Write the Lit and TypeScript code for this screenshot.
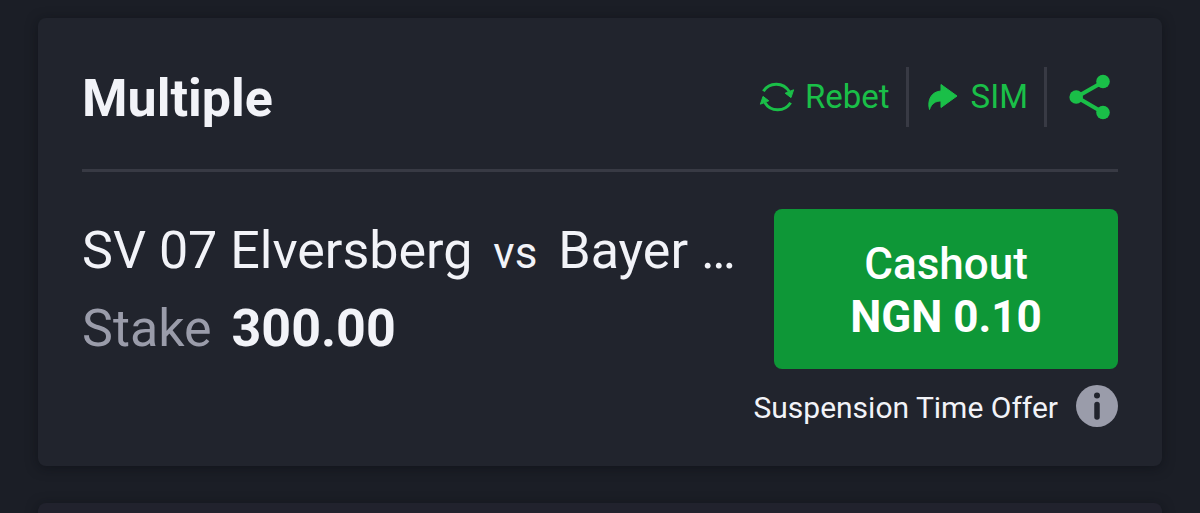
import { LitElement, html, css, svg } from "lit";
import { customElement, property } from "lit/decorators.js";

const rebetIcon = svg`
  <svg class="icon" width="36" height="36" viewBox="0 0 36 36" fill="none" stroke="currentColor" stroke-width="3" aria-hidden="true">
    <path d="M4.400 12.200A15.200 15.200 0 0 1 30.200 12.600"/>
    <path d="M31.600 23.800A15.200 15.200 0 0 1 5.800 23.400"/>
    <path fill="currentColor" stroke-width="1" stroke-linejoin="round" d="M26.200 14.200 34.600 10.800 32 18.600ZM9.800 21.800 1.400 25.200 4 17.400Z"/>
  </svg>`;

const forwardIcon = svg`
  <svg class="icon" width="32" height="28" viewBox="0 0 32 28" fill="currentColor" aria-hidden="true">
    <path stroke="currentColor" stroke-linejoin="round" d="M14 1.500 30 13 14 24.500V18C8.500 18 4.500 20.500 2.500 26.500 0 17 4.500 8.500 14 8Z"/>
  </svg>`;

const shareIcon = svg`
  <svg class="icon" width="42" height="46" viewBox="0 0 42 46" fill="currentColor" aria-hidden="true">
    <path d="M34 8 7.500 23 34 38.500" fill="none" stroke="currentColor" stroke-width="4"/>
    <circle cx="34" cy="7.500" r="6.800"/>
    <circle cx="7.200" cy="23" r="6.800"/>
    <circle cx="34" cy="38.500" r="6.800"/>
  </svg>`;

const infoIcon = svg`
  <svg class="icon" width="42" height="42" viewBox="0 0 42 42" aria-hidden="true">
    <circle cx="21" cy="21" r="21" fill="#9a9caa"/>
    <circle cx="21" cy="10.500" r="3" fill="#21242d"/>
    <path d="M21 19.500V32" stroke="#21242d" stroke-width="5.500" stroke-linecap="round"/>
  </svg>`;

@customElement("bet-card")
export class BetCard extends LitElement {
  @property() kind = "";
  @property() home = "";
  @property() away = "";
  @property() stake = "";
  @property() offer = "";

  static styles = css`
    :host {
      display: block;
      padding: 0 44px 39px;
      border-radius: 8px;
      background: #21242d;
      box-shadow: 0 2px 12px rgba(10, 12, 18, 0.5);
    }
    .header {
      display: flex;
      align-items: center;
      justify-content: space-between;
      padding: 47px 0 40px;
      border-bottom: 3px solid #383a44;
    }
    .title {
      margin: 0;
      padding-top: 4px;
      font-size: 52px;
      line-height: 60px;
      font-weight: 700;
    }
    .actions {
      display: flex;
      align-items: center;
      color: #1abf48;
    }
    .icon {
      display: block;
      flex: none;
    }
    button {
      margin: 0;
      padding: 0;
      border: 0;
      background: none;
      color: inherit;
      font: inherit;
      cursor: pointer;
    }
    .action {
      display: flex;
      align-items: center;
      gap: 12px;
      height: 60px;
      padding: 0 16px 0 18px;
      border-right: 3px solid #383a44;
      font-size: 33px;
      line-height: 40px;
    }
    .rebet {
      gap: 10px;
    }
    .share {
      padding: 0 7px 0 22px;
    }
    .body {
      display: flex;
      justify-content: space-between;
      gap: 16px;
      padding-top: 37px;
    }
    .details {
      flex: 1;
      min-width: 0;
      font-size: 52px;
      line-height: 75px;
      padding-top: 4px;
    }
    .match,
    .stake {
      margin: 0;
      overflow: hidden;
      white-space: nowrap;
      text-overflow: ellipsis;
    }
    .versus {
      margin: 0 8px;
      font-size: 44px;
    }
    .label {
      margin-right: 7px;
      color: #9a9caa;
    }
    .amount {
      font-weight: 700;
    }
    .side {
      display: flex;
      flex-direction: column;
      align-items: flex-end;
      gap: 16px;
    }
    .cashout {
      width: 344px;
      padding: 29px 16px 25px;
      border-radius: 8px;
      background: #0e9737;
      color: #fff;
      font-size: 44px;
      line-height: 53px;
      font-weight: 500;
    }
    .cashout-line {
      display: block;
    }
    .cashout .amount {
      font-weight: 700;
    }
    .note {
      display: flex;
      align-items: center;
      gap: 18px;
      font-size: 30px;
      line-height: 38px;
      white-space: nowrap;
    }
    .note-text {
      padding-top: 4px;
    }
  `;

  render() {
    return html`
      <header class="header">
        <h2 class="title">${this.kind}</h2>
        <div class="actions">
          <button class="action rebet" type="button">${rebetIcon}<span>Rebet</span></button>
          <button class="action" type="button">${forwardIcon}<span>SIM</span></button>
          <button class="share" type="button" aria-label="Share">${shareIcon}</button>
        </div>
      </header>
      <div class="body">
        <div class="details">
          <p class="match">${this.home} <span class="versus">vs</span> ${this.away}</p>
          <p class="stake"><span class="label">Stake</span> <span class="amount">${this.stake}</span></p>
        </div>
        <div class="side">
          <button class="cashout" type="button">
            <span class="cashout-line">Cashout</span>
            <span class="cashout-line amount">${this.offer}</span>
          </button>
          <div class="note">
            <span class="note-text">Suspension Time Offer</span>
            <button type="button" aria-label="Info">${infoIcon}</button>
          </div>
        </div>
      </div>
    `;
  }
}

@customElement("app-root")
export class AppRoot extends LitElement {
  static styles = css`
    :host {
      display: flex;
      flex-direction: column;
      gap: 37px;
      box-sizing: border-box;
      height: 100vh;
      overflow: hidden;
      padding: 18px 38px 0;
      background: #1b1e26;
      color: #f2f3f8;
      font-family: Roboto, sans-serif;
    }
    .bet {
      flex: none;
    }
    .next {
      flex: none;
      height: 448px;
      border-radius: 8px;
      background: #21222d;
      box-shadow: 0 2px 12px rgba(10, 12, 18, 0.5);
    }
  `;

  render() {
    return html`
      <bet-card
        class="bet"
        kind="Multiple"
        home="SV 07 Elversberg"
        away="Bayer …"
        stake="300.00"
        offer="NGN 0.10"
      ></bet-card>
      <div class="next"></div>
    `;
  }
}
